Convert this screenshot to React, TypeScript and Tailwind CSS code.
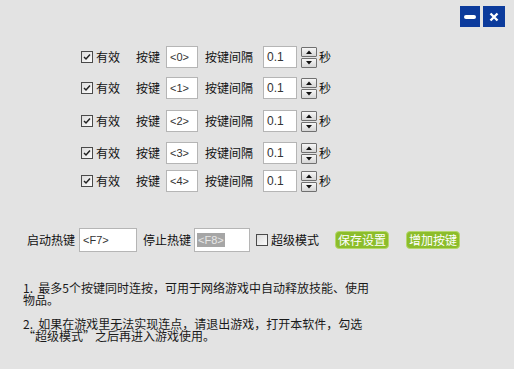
import React from "react";

const rows = [
  { key: "<0>", mt: "mt-[19px]" },
  { key: "<1>", mt: "mt-[9px]" },
  { key: "<2>", mt: "mt-[11px]" },
  { key: "<3>", mt: "mt-[10px]" },
  { key: "<4>", mt: "mt-[6px]" },
];

const Check = ({ on }: { on?: boolean }) => (
  <span className="w-[12px] h-[12px] shrink-0 border border-[#4a4a4a] bg-gradient-to-br from-[#dcdcdc] to-[#fbfbfb] flex items-center justify-center">
    {on && (
      <svg width="8" height="8" viewBox="0 0 8 8">
        <path d="M1 4 L3 6 L7 1.5" fill="none" stroke="#222" strokeWidth="1.5" />
      </svg>
    )}
  </span>
);

const Spinner = () => (
  <div className="ml-[4px] flex flex-col gap-[1px] w-[16px]">
    {[0, 1].map((i) => (
      <div
        key={i}
        className="h-[10px] border border-[#707070] rounded-[1px] bg-gradient-to-b from-[#f6f6f6] to-[#d6d6d6] flex items-center justify-center"
      >
        <svg width="6" height="4" viewBox="0 0 6 4">
          <path d={i === 0 ? "M0 4 L3 0.5 L6 4 Z" : "M0 0 L3 3.5 L6 0 Z"} fill="#111" />
        </svg>
      </div>
    ))}
  </div>
);

export default function App() {
  return (
    <div className="w-[514px] h-[369px] bg-[#e3e3e3] text-[12px] text-[#111] font-['Noto_Sans_CJK_SC',sans-serif] overflow-hidden flex flex-col">
      {/* title buttons */}
      <div className="flex justify-end gap-[3px] pt-[6px] pr-[9px]">
        <div className="w-[20px] h-[21px] bg-[#0c3b9c] flex items-center justify-center">
          <span className="w-[12px] h-[4px] rounded-full bg-white" />
        </div>
        <div className="w-[22px] h-[21px] bg-[#0c3b9c] flex items-center justify-center">
          <svg width="10" height="10" viewBox="0 0 10 10">
            <path d="M1.5 1.5 L8.5 8.5 M8.5 1.5 L1.5 8.5" stroke="#fff" strokeWidth="2.4" />
          </svg>
        </div>
      </div>

      {/* key rows */}
      {rows.map((r) => (
        <div key={r.key} className={`${r.mt} pl-[81px] h-[22px] flex items-center leading-none`}>
          <Check on />
          <span className="ml-[3px]">有效</span>
          <span className="ml-[16px]">按键</span>
          <div className="ml-[6px] w-[32px] h-[22px] bg-white border border-[#b5b5b5] flex items-center pl-[3px] text-[11px] text-[#333] font-['Liberation_Sans',sans-serif]">
            {r.key}
          </div>
          <span className="ml-[7px]">按键间隔</span>
          <div className="ml-[10px] w-[34px] h-[22px] bg-white border border-[#b5b5b5] flex items-center pl-[3px] text-[12px] text-[#333] font-['Liberation_Sans',sans-serif]">
            0.1
          </div>
          <Spinner />
          <span className="ml-[2px]">秒</span>
        </div>
      ))}

      {/* hotkeys */}
      <div className="mt-[36px] pl-[27px] h-[24px] flex items-center leading-none">
        <span>启动热键</span>
        <div className="ml-[4px] w-[58px] h-[24px] bg-white border border-[#b5b5b5] flex items-center pl-[3px] text-[11px] text-[#333] font-['Liberation_Sans',sans-serif]">
          &lt;F7&gt;
        </div>
        <span className="ml-[6px]">停止热键</span>
        <div className="ml-[3px] w-[56px] h-[24px] bg-white border border-[#b5b5b5] flex items-center pl-[2px] text-[11px] font-['Liberation_Sans',sans-serif]">
          <span className="bg-[#a6a6a6] text-[#e8e8e8] px-[1px] leading-[14px]">&lt;F8&gt;</span>
        </div>
        <span className="ml-[6px]">
          <Check />
        </span>
        <span className="ml-[3px]">超级模式</span>
        <button className="ml-[16px] w-[54px] h-[18px] rounded-[4px] bg-[#8cbd2b] border border-[#b5d86a] text-white text-[12px] leading-none">
          保存设置
        </button>
        <button className="ml-[17px] w-[54px] h-[18px] rounded-[4px] bg-[#8cbd2b] border border-[#b5d86a] text-white text-[12px] leading-none">
          增加按键
        </button>
      </div>

      {/* notes */}
      <div className="mt-[30px] pl-[23px] leading-[12px] text-[12px] text-[#1a1a1a]">
        <p>1.&nbsp;&nbsp;最多5个按键同时连按，可用于网络游戏中自动释放技能、使用</p>
        <p>物品。</p>
        <p className="mt-[12px]">2.&nbsp;&nbsp;如果在游戏里无法实现连点，请退出游戏，打开本软件，勾选</p>
        <p>“超级模式”之后再进入游戏使用。</p>
      </div>
    </div>
  );
}
